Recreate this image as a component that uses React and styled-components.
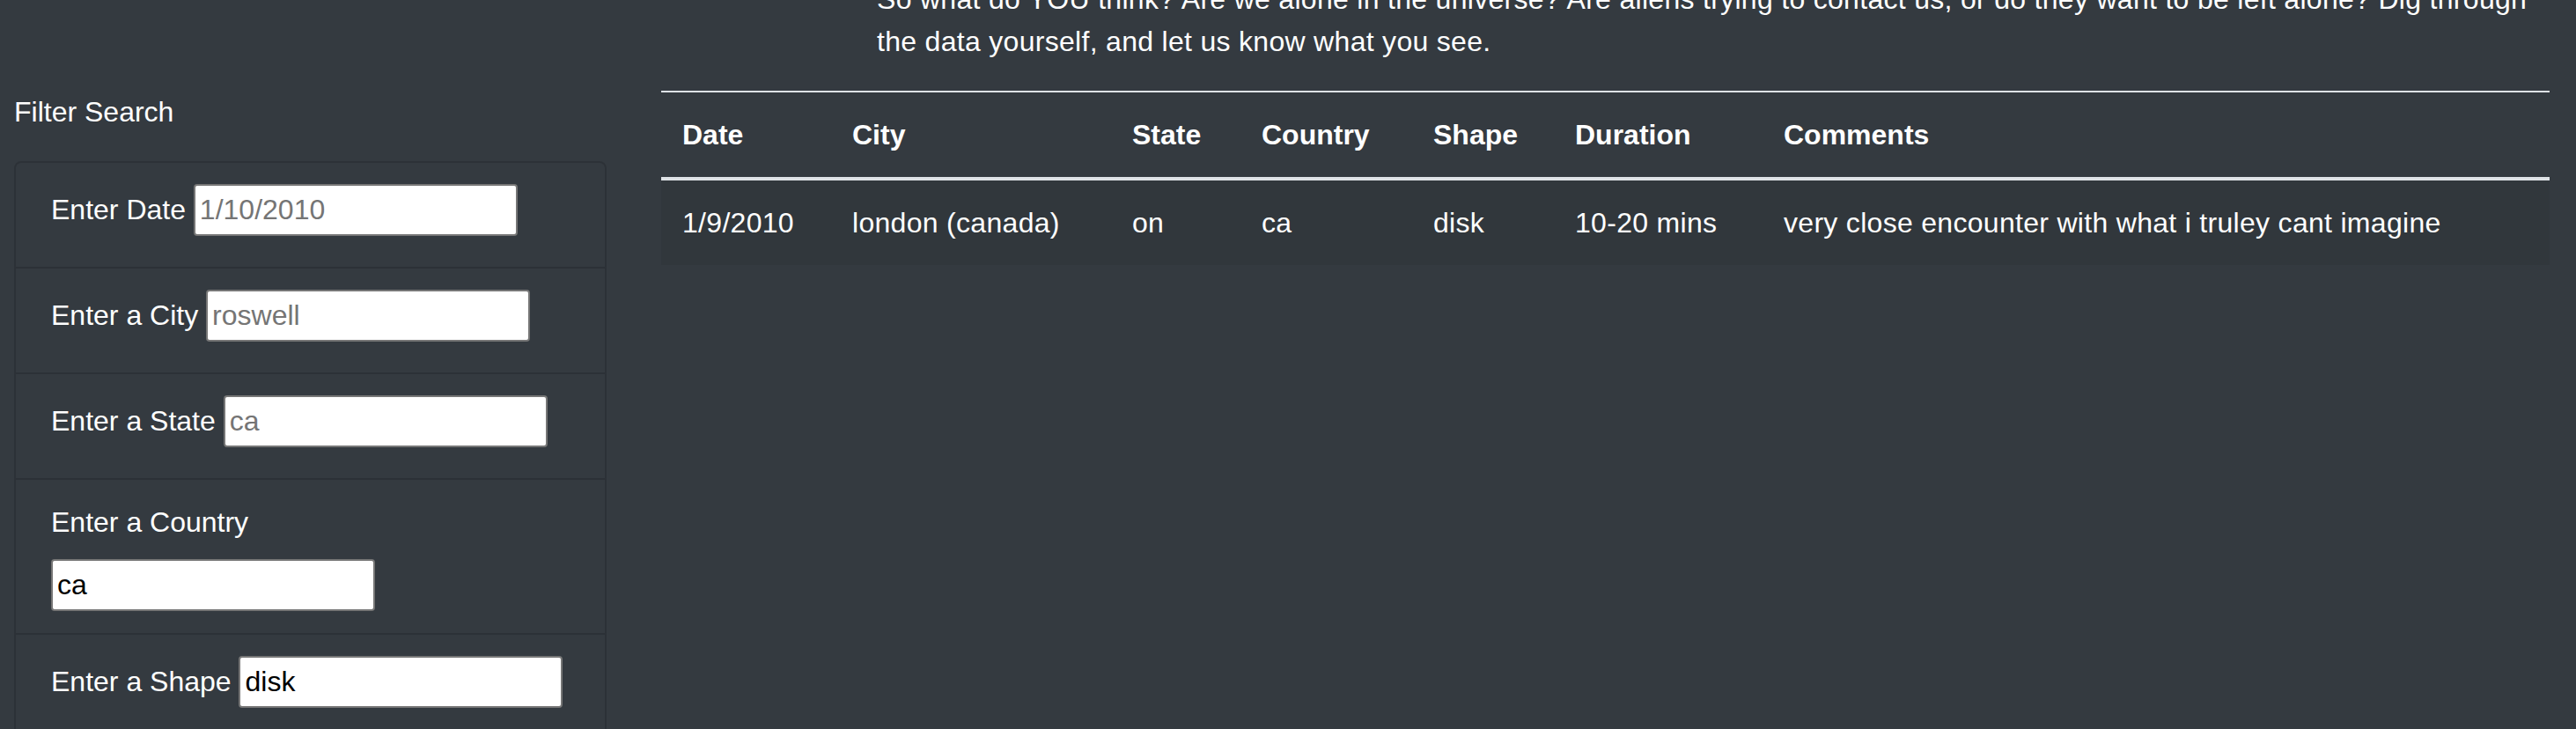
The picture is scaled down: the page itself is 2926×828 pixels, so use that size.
import { createGlobalStyle } from "styled-components";
import styled from "styled-components";

const GlobalStyle = createGlobalStyle`
  html, body {
    margin: 0;
    padding: 0;
    overflow: hidden;
    background-color: #343a40;
    color: #fff;
    font-family: "Liberation Sans", Arial, sans-serif;
    font-size: 32px;
    line-height: 1.5;
  }
  * {
    box-sizing: border-box;
  }
`;

const Page = styled.div`
  display: flex;
  align-items: flex-start;
  padding: 0 30px 0 16px;
  height: 828px;
`;

const Sidebar = styled.aside`
  width: 673px;
  flex: none;
  margin-top: 103px;
`;

const SidebarTitle = styled.div`
  font-size: 32px;
  line-height: 48px;
  margin-bottom: 32px;
`;

const FilterList = styled.ul`
  list-style: none;
  margin: 0;
  padding: 0;
  border: 2px solid rgba(0, 0, 0, 0.14);
  border-radius: 8px;
`;

const FilterItem = styled.li`
  padding: 24px 40px 25px;
  & + & {
    border-top: 2px solid rgba(0, 0, 0, 0.14);
  }
`;

const Label = styled.label`
  display: ${(p) => (p.$stack ? "block" : "inline-block")};
  margin-bottom: ${(p) => (p.$stack ? "18px" : "16px")};
`;

const Input = styled.input`
  width: 368px;
  height: 59px;
  padding: 0 5px;
  border: 2px solid #767676;
  border-radius: 4px;
  background: #fff;
  color: #000;
  font-family: inherit;
  font-size: 32px;
  vertical-align: baseline;
  &::placeholder {
    color: #757575;
  }
`;

const Main = styled.main`
  flex: 1;
  min-width: 0;
  margin-left: 62px;
  letter-spacing: 0.3px;
`;

const Intro = styled.p`
  width: 1900px;
  margin: -25px 0 32px 245px;
  line-height: 48px;
`;

const Table = styled.table`
  width: 100%;
  table-layout: fixed;
  border-collapse: collapse;
  color: #fff;
`;

const Col = styled.col`
  width: ${(p) => (p.$w ? `${p.$w}px` : "auto")};
`;

const Th = styled.th`
  padding: 24px;
  text-align: left;
  font-weight: bold;
  letter-spacing: 0;
  vertical-align: bottom;
  border-top: 2px solid #dee2e6;
  border-bottom: 4px solid #dee2e6;
`;

const Row = styled.tr`
  background-color: rgba(0, 0, 0, 0.05);
`;

const Td = styled.td`
  padding: 24px;
  vertical-align: top;
`;

const filters = [
  { id: "datetime", label: "Enter Date", placeholder: "1/10/2010" },
  { id: "city", label: "Enter a City", placeholder: "roswell" },
  { id: "state", label: "Enter a State", placeholder: "ca" },
  { id: "country", label: "Enter a Country", value: "ca", stack: true },
  { id: "shape", label: "Enter a Shape", value: "disk" },
];

const columns = [
  { name: "Date", w: 193 },
  { name: "City", w: 318 },
  { name: "State", w: 147 },
  { name: "Country", w: 195 },
  { name: "Shape", w: 161 },
  { name: "Duration", w: 237 },
  { name: "Comments" },
];

const sightings = [
  {
    datetime: "1/9/2010",
    city: "london (canada)",
    state: "on",
    country: "ca",
    shape: "disk",
    duration: "10-20 mins",
    comments: "very close encounter with what i truley cant imagine",
  },
];

export default function App() {
  return (
    <>
      <GlobalStyle />
      <Page>
        <Sidebar>
          <SidebarTitle>Filter Search</SidebarTitle>
          <FilterList>
            {filters.map((f) => (
              <FilterItem key={f.id}>
                <Label htmlFor={f.id} $stack={f.stack}>
                  {f.label}
                </Label>{" "}
                <Input
                  id={f.id}
                  type="text"
                  placeholder={f.placeholder}
                  defaultValue={f.value}
                />
              </FilterItem>
            ))}
          </FilterList>
        </Sidebar>
        <Main>
          <Intro>
            So what do YOU think? Are we alone in the universe? Are aliens trying
            to contact us, or do they want to be left alone? Dig through the data
            yourself, and let us know what you see.
          </Intro>
          <Table>
            <colgroup>
              {columns.map((c) => (
                <Col key={c.name} $w={c.w} />
              ))}
            </colgroup>
            <thead>
              <tr>
                {columns.map((c) => (
                  <Th key={c.name}>{c.name}</Th>
                ))}
              </tr>
            </thead>
            <tbody>
              {sightings.map((s, i) => (
                <Row key={i}>
                  <Td>{s.datetime}</Td>
                  <Td>{s.city}</Td>
                  <Td>{s.state}</Td>
                  <Td>{s.country}</Td>
                  <Td>{s.shape}</Td>
                  <Td>{s.duration}</Td>
                  <Td>{s.comments}</Td>
                </Row>
              ))}
            </tbody>
          </Table>
        </Main>
      </Page>
    </>
  );
}
